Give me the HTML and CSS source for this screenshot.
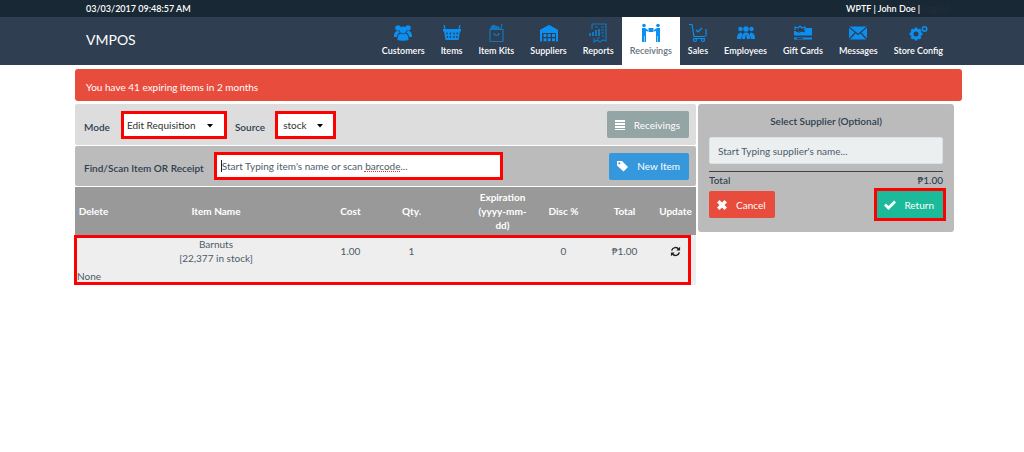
FILE: index.html
```
<!DOCTYPE html>
<html lang="en">
<head>
<meta charset="utf-8">
<title>VMPOS</title>
<meta name="viewport" content="width=device-width, initial-scale=1">
<link rel="stylesheet" href="styles.css">
</head>
<body>
<div class="topbar">
  <span>03/03/2017 09:48:57 AM</span>
  <span>WPTF | John Doe | <a class="logout" href="#">Logout</a></span>
</div>
<header class="navbar">
  <a class="brand" href="#">VMPOS</a>
  <nav class="menu">
    <a href="#"><svg viewBox="0 0 20 20"><circle cx="5" cy="5" r="2.8"/><circle cx="15" cy="5" r="2.8"/><path d="M1 14c0-4 1-6 4-6l2 1c-2 2-3 3-3 5zM19 14c0-4-1-6-4-6l-2 1c2 2 3 3 3 5z"/><circle cx="10" cy="7" r="3.4"/><path d="M4.500 17c0-4 1-6 3-6.500q2.500 1.500 5 0c2 .5 3 2.500 3 6.500-2 1-9 1-11 0z"/></svg>Customers</a>
    <a href="#"><svg viewBox="0 0 20 20"><path d="M1 6h18v2.500h-1L16.500 17h-13L2 8.500H1z"/><path class="line" d="M3 6l-1-4M17 6l1-4"/><path class="cut" d="M5 9.500v2M8.500 9.500v2M12 9.500v2M15.200 9.500v2M5.500 13v2M8.500 13v2M12 13v2M14.800 13v2"/></svg>Items</a>
    <a href="#"><svg class="dim" viewBox="0 0 20 20"><path class="line" d="M4 6.500h13v12H4zM8 10c0 3 5 3 5 0M15 6l1-5"/><path d="M4 6l1-3 3-1.500L10 3l3 .5 1 2.500z"/></svg>Item Kits</a>
    <a href="#"><svg viewBox="0 0 20 20"><path d="M1 7l9-5 9 5v11.500h-2V10H3v8.500H1z"/><path d="M1 7l9-5 9 5v2H1z"/><path d="M4.500 11h3v3h-3zM8.700 11h3v3h-3zM13 11h3v3h-3zM4.500 15.300h3v3h-3zM8.700 15.300h3v3h-3zM13 15.300h3v3h-3z"/></svg>Suppliers</a>
    <a href="#"><svg class="dim" viewBox="0 0 20 20"><path class="line" d="M4 6V1h14v17l-3-1-3 2-3-2-3 2v-4M7 4h3M13 4h3M13 7h3M13 10h3M9 15h3M14 13h2"/><path d="M1 10h2v3H1zM4 9h2v4H4zM7 7h2v6H7zM10 6h2v7h-2z"/></svg>Reports</a>
    <a class="active" href="#"><svg viewBox="0 0 20 20"><circle cx="3" cy="2.500" r="1.800"/><circle cx="17" cy="2.500" r="1.800"/><path d="M1 5h3l3 2v1.500L5 8v11H3.500v-6H3v6H1zM19 5h-3l-3 2v1.500l2-.5v11h1.500v-6h.5v6h2zM7.500 5h5v4h-5z"/></svg>Receivings</a>
    <a href="#"><svg viewBox="0 0 20 20"><path class="line" d="M1 1.500h3l2 12h11M17 15.500H6l-1 1M8 7l2 2 4-4M18 6v7.500"/><circle class="line" cx="7" cy="17" r="1.500"/><circle class="line" cx="15" cy="17" r="1.500"/></svg>Sales</a>
    <a href="#"><svg viewBox="0 0 20 20"><circle cx="4.500" cy="6" r="2.200"/><circle cx="15.500" cy="6" r="2.200"/><circle cx="10" cy="6" r="2.800"/><path d="M1 16c0-4 1-6 4-6.500L6.500 11 5 16zM19 16c0-4-1-6-4-6.500L13.500 11l1.500 5zM6 16c0-4 1-6 3-6.500h2c2 .5 3 2.500 3 6.500h-3l-1-5-1 5z"/></svg>Employees</a>
    <a href="#"><svg viewBox="0 0 20 20"><path d="M1 8h18v4.500H1zM12 5h7v4h-7zM1 14.500h18v2H1z"/><path class="line" d="M2 7V4l3 1 2-2 2 2 3-1v4"/><path class="cut" d="M3 8l3 1 3-1 3 1M4 15.500h6"/></svg>Gift Cards</a>
    <a href="#"><svg viewBox="0 0 20 20"><path d="M1 3.500h18v13H1z"/><path class="cut" d="M1 4l9 7.500L19 4M1 16.500l6.500-7M19 16.500l-6.500-7"/></svg>Messages</a>
    <a href="#"><svg viewBox="0 0 20 20"><circle class="gear" cx="8" cy="11" r="4"/><path class="teeth" d="M8 4.500v2.500M8 15v2.500M1.500 11h2.500M12 11h2.500M3.400 6.400l1.800 1.800M10.800 13.800l1.800 1.800M3.400 15.600l1.800-1.800M10.800 8.200l1.800-1.800"/><circle class="ring" cx="16.500" cy="6" r="2.200"/></svg>Store Config</a>
  </nav>
</header>
<main class="page">
  <div class="alert" role="alert">You have 41 expiring items in 2 months</div>
  <div class="columns">
    <section class="register">
      <form class="bar mode">
        <label for="mode">Mode</label>
        <span class="pick marked wide"><select id="mode"><option>Edit Requisition</option></select><svg viewBox="0 0 6 4"><path d="M0 0h6L3 3.500z"/></svg></span>
        <label for="source">Source</label>
        <span class="pick marked"><select id="source"><option>stock</option></select><svg viewBox="0 0 6 4"><path d="M0 0h6L3 3.500z"/></svg></span>
        <button class="btn grey" type="button"><svg viewBox="0 0 12 12"><path d="M1 1h10v2H1zM1 4h10v2H1zM1 7h10v2H1zM1 10h10v1H1z"/></svg>Receivings</button>
      </form>
      <form class="bar find">
        <label for="item">Find/Scan Item OR Receipt</label>
        <span class="search marked"><input id="item" type="text" placeholder="Start Typing item's name or scan barcode..."><i class="cursor"></i><i class="spelling"></i></span>
        <button class="btn blue" type="button"><svg viewBox="0 0 12 12"><path fill-rule="evenodd" d="M1 1h5l6 6-4.500 4.500L1 5.500zM3.300 2.300a1 1 0 1 0 .01 0z"/></svg>New Item</button>
      </form>
      <div class="cart">
        <table>
          <colgroup><col class="c-delete"><col class="c-name"><col class="c-num"><col class="c-num"><col class="c-gap"><col class="c-num"><col class="c-num"><col class="c-num"><col class="c-update"></colgroup>
          <thead><tr><th>Delete</th><th>Item Name</th><th>Cost</th><th>Qty.</th><th></th><th>Expiration<br>(yyyy-mm-<br>dd)</th><th>Disc %</th><th>Total</th><th>Update</th></tr></thead>
          <tbody>
            <tr><td></td><td>Barnuts<br>[22,377 in stock]</td><td>1.00</td><td>1</td><td></td><td></td><td>0</td><td>₱1.00</td><td><button class="refresh" type="button" aria-label="Update"><svg viewBox="0 0 12 12"><path class="arc" d="M1.800 5A4.300 4.300 0 0 1 9.500 3.500M10.200 7A4.300 4.300 0 0 1 2.500 8.500"/><path d="M11 .8V5H6.800zM1 11.200V7h4.200z"/></svg></button></td></tr>
            <tr class="note"><td colspan="9">None</td></tr>
          </tbody>
        </table>
        <div class="outline"></div>
      </div>
    </section>
    <aside class="summary">
      <label for="supplier">Select Supplier (Optional)</label>
      <input id="supplier" type="text" placeholder="Start Typing supplier's name...">
      <div class="total"><span>Total</span><span>₱1.00</span></div>
      <div class="actions">
        <button class="btn red" type="button"><svg viewBox="0 0 12 12"><path d="M3.500 1L6 3.500 8.500 1 11 3.500 8.500 6 11 8.500 8.500 11 6 8.500 3.500 11 1 8.500 3.500 6 1 3.500z"/></svg>Cancel</button>
        <span class="return"><button class="btn green" type="button"><svg viewBox="0 0 12 12"><path d="M0 6.500l2-2L4.500 7 10 1.500l2 2L4.500 11z"/></svg>Return</button></span>
      </div>
    </aside>
  </div>
</main>
</body>
</html>
```
FILE: styles.css
```
* { box-sizing: border-box; }
body {
  margin: 0;
  background: #fff;
  color: #2f3e50;
  font: 10px/14px Lato, "Liberation Sans", sans-serif;
}
a { color: inherit; text-decoration: none; }
svg { display: block; fill: currentColor; }
button, input, select { font: inherit; color: inherit; }
.topbar, .navbar { display: flex; justify-content: space-between; color: #fff; }
.topbar { height: 17px; padding: 0 74px 0 86px; background: #192835; font-size: 9px; line-height: 17px; font-weight: 600; }
.logout { color: #232c34; }
.navbar { height: 48px; padding: 0 73px 0 86px; background: #2f3e50; }
.brand { font-size: 14px; line-height: 45px; }
.menu { display: flex; font-size: 9px; line-height: 12px; font-weight: 600; }
.menu a { display: flex; flex-direction: column; align-items: center; gap: 2px; padding: 6px 8px 0; white-space: nowrap; }
.menu svg { width: 20px; height: 20px; color: #0b8ff0; }
.menu .dim { opacity: 0.7; }
.menu .active { background: #fff; color: #66727e; }
.line { fill: none; stroke: currentColor; stroke-width: 1.2; }
.cut { fill: none; stroke: #2f3e50; stroke-width: 1.2; }
.gear { fill: none; stroke: currentColor; stroke-width: 3; }
.teeth { fill: none; stroke: currentColor; stroke-width: 2.5; }
.ring { fill: none; stroke: currentColor; stroke-width: 1.6; }

.page { padding: 4px 62px 0 75px; }
.alert { background: #e84c3d; color: #fff; border-radius: 3px; padding: 11px 11px 7px; }
.columns { display: flex; align-items: flex-start; gap: 2px; margin: 3px 8px 0 0; }
.register { flex: 1; min-width: 0; }
.bar { display: flex; align-items: center; height: 41px; margin-bottom: 1px; padding: 0 7px 0 9px; border-radius: 2px; }
.bar label { font-weight: 600; padding-top: 4px; white-space: nowrap; }
.mode { background: #ddd; }
.find { height: 40px; background: #bbb; }
.marked { position: relative; border: 3px solid #f00; background: #fff; height: 28px; }
.pick { width: 61px; margin: 0 0 0 10px; }
.pick.wide { width: 106px; margin: 0 8px 0 11px; }
.pick select { width: 100%; height: 22px; padding: 0 5px; border: 0; background: transparent; appearance: none; color: #34302c; }
.pick.wide select { padding: 0 3px; }
.pick svg { position: absolute; right: 10px; top: 10px; width: 6px; height: 4px; color: #000; }
.pick.wide svg { right: 11px; }
.btn { display: flex; align-items: center; gap: 8px; height: 27px; padding: 0 9px 0 7px; border: 0; border-radius: 2px; color: #fff; }
.btn svg { width: 12px; height: 12px; }
.bar .btn { margin-left: auto; }
.grey { background: #94a5a5; }
.blue { gap: 9px; background: #3598dc; }
.red { background: #e84c3d; }
.green { background: #1bba9b; }
.search { flex: 1; max-width: 289px; margin-left: 10px; }
.search input { width: 100%; height: 22px; padding: 0 5px; border: 0; background: transparent; }
input::placeholder { color: #4c5b69; opacity: 1; }
.cursor { position: absolute; left: 4px; top: 5px; width: 1px; height: 12px; background: #222; }
.spelling { position: absolute; left: 147px; top: 16px; width: 36px; border-bottom: 1px dotted #e33; }

.cart { position: relative; }
table { width: 100%; table-layout: fixed; border-collapse: collapse; text-align: center; background: #eee; }
.c-delete { width: 37px; }
.c-num { width: 61px; }
.c-gap { width: 30px; }
.c-update { width: 41px; }
th, td { padding: 0; }
th { height: 48px; background: #999; color: #fff; font-weight: 700; }
td { height: 32px; color: #4c5b69; }
.note td { height: 18px; padding: 0 2px; text-align: left; }
.refresh { display: block; margin: 0 auto; padding: 0; border: 0; background: none; color: #222; }
.refresh svg { width: 11px; height: 11px; }
.arc { fill: none; stroke: currentColor; stroke-width: 1.6; }
.outline { position: absolute; inset: 48px 5px 0 -1px; border: 3px solid #f00; pointer-events: none; }

.summary { width: 256px; min-height: 128px; padding: 10px 11px 0; background: #bbb; border-radius: 3px; }
.summary label { display: block; text-align: center; font-weight: 600; }
.summary input { display: block; width: 100%; height: 27px; margin: 9px 0 7px; padding: 0 8px; border: 1px solid #dce1e8; border-radius: 2px; background: #ebeff0; }
.total { display: flex; justify-content: space-between; border-top: 1px solid #444; padding-top: 1px; font-weight: 500; }
.actions { display: flex; justify-content: space-between; align-items: flex-start; padding-top: 4px; }
.return { margin: -3px -3px 0 0; border: 3px solid #f00; }
.return .btn { border-radius: 0; }
```
